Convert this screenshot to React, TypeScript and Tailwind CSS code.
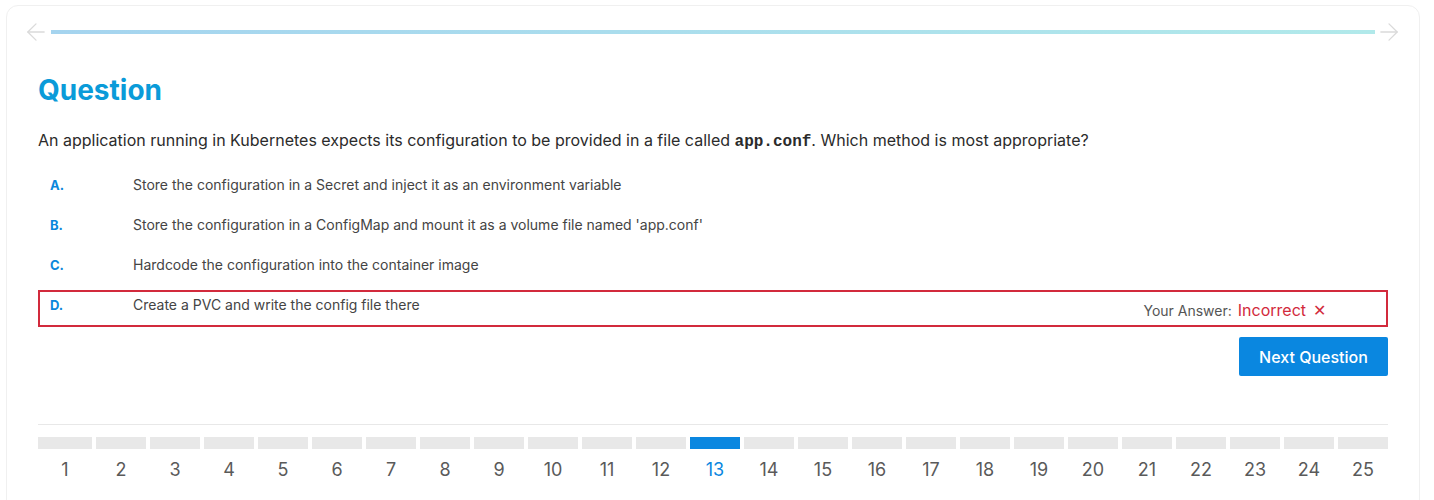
import React from "react";
import { ArrowLeft, ArrowRight } from "lucide-react";

const options = [
  { l: "A.", t: "Store the configuration in a Secret and inject it as an environment variable" },
  { l: "B.", t: "Store the configuration in a ConfigMap and mount it as a volume file named 'app.conf'" },
  { l: "C.", t: "Hardcode the configuration into the container image" },
  { l: "D.", t: "Create a PVC and write the config file there", wrong: true },
];

export default function App() {
  const nums = Array.from({ length: 25 }, (_, i) => i + 1);
  return (
    <div className="bg-white min-h-[500px] pl-[6px] pr-[14px] pt-[5px]" style={{ fontFamily: "Inter, 'Noto Sans', sans-serif" }}>
      <div className="border border-[#f0f0f0] rounded-xl px-[31px] pt-[18px] pb-10">
        <div className="flex items-center h-4 -ml-[16px] -mr-[15px]">
          <ArrowLeft className="w-7 h-7 text-[#dadada] shrink-0" strokeWidth={1.1} />
          <div className="flex-1 h-[4px] ml-[1px] bg-gradient-to-r from-[#a5d4ef] to-[#b1e9ea]" />
          <ArrowRight className="w-7 h-7 text-[#dadada] shrink-0" strokeWidth={1.1} />
        </div>
        <h1 className="mt-[33px] text-[28px] leading-[34px] font-bold text-[#0a9bd9]">Question</h1>
        <p className="mt-[21px] text-base leading-6 text-[#2b2b2b]">
          An application running in Kubernetes expects its configuration to be provided in a file called{" "}
          <code className="font-bold" style={{ fontFamily: "'Liberation Mono', monospace" }}>app.conf</code>. Which method is most appropriate?
        </p>
        <div className="mt-[16px]">
          {options.map((o) => (
            <div
              key={o.l}
              className={`flex items-start h-[37px] mb-[3px] border-2 pl-[10px] pt-[3px] ${o.wrong ? "border-[#d22a3c]" : "border-transparent"}`}
            >
              <span className="w-[83px] shrink-0 text-[13px] leading-5 font-bold text-[#0a87dc]">{o.l}</span>
              <span className="flex-1 text-sm leading-5 text-[#444]">{o.t}</span>
              {o.wrong && (
                <span className="flex items-baseline mt-[3px] pr-[60px]">
                  <span className="text-sm text-[#555]">Your Answer:</span>
                  <span className="ml-[6px] text-base text-[#d22a3c]">Incorrect</span>
                  <span className="ml-[7px] text-base text-[#d22a3c]">✕</span>
                </span>
              )}
            </div>
          ))}
        </div>
        <div className="flex justify-end mt-[10px]">
          <button className="w-[149px] h-[39px] rounded-[2px] bg-[#0a87e0] text-white text-base font-medium">Next Question</button>
        </div>
        <div className="mt-[48px] border-t border-[#e8e8e8]" />
        <div className="mt-[12px] grid grid-cols-[repeat(25,minmax(0,1fr))]">
          {nums.map((n) => (
            <div key={n} className={n === 1 ? "" : "pl-1"}>
              <div className={`h-3 ${n === 13 ? "bg-[#0a87e0]" : "bg-[#e8e8e8]"}`} />
              <div className={`mt-[7px] text-center text-lg leading-7 ${n === 13 ? "text-[#0a87e0]" : "text-[#5a5a5a]"}`}>{n}</div>
            </div>
          ))}
        </div>
      </div>
    </div>
  );
}
